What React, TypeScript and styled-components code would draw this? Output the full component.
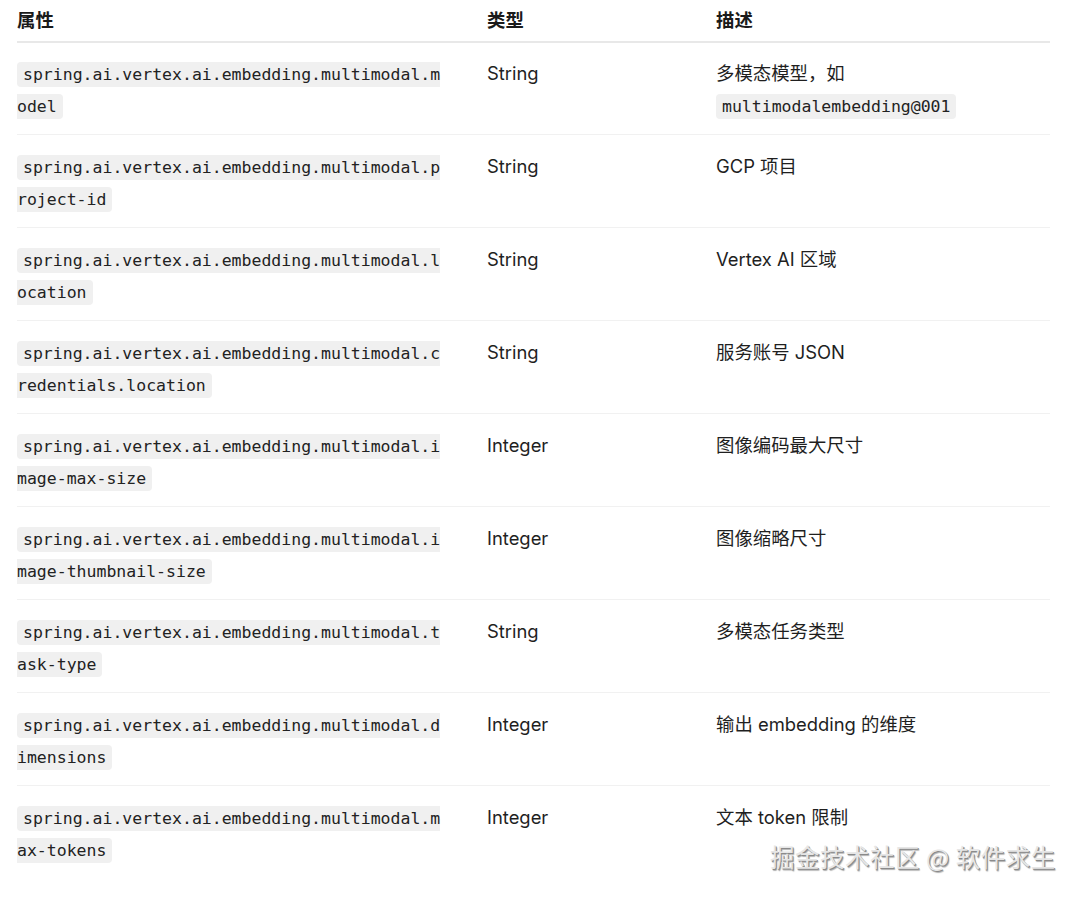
import styled, { createGlobalStyle } from "styled-components";

const GlobalStyle = createGlobalStyle`
    body {
        margin: 0;
        background: #fff;
        font-family: "Inter", "Noto Sans CJK SC", sans-serif;
        color: #1f1f1f;
    }
`;

type Row = {
    prop: string;
    type: string;
    desc: string;
    descCode?: string;
};

const rows: Row[] = [
    {prop: "spring.ai.vertex.ai.embedding.multimodal.model", type: "String", desc: "多模态模型，如", descCode: "multimodalembedding@001"},
    {prop: "spring.ai.vertex.ai.embedding.multimodal.project-id", type: "String", desc: "GCP 项目"},
    {prop: "spring.ai.vertex.ai.embedding.multimodal.location", type: "String", desc: "Vertex AI 区域"},
    {prop: "spring.ai.vertex.ai.embedding.multimodal.credentials.location", type: "String", desc: "服务账号 JSON"},
    {prop: "spring.ai.vertex.ai.embedding.multimodal.image-max-size", type: "Integer", desc: "图像编码最大尺寸"},
    {prop: "spring.ai.vertex.ai.embedding.multimodal.image-thumbnail-size", type: "Integer", desc: "图像缩略尺寸"},
    {prop: "spring.ai.vertex.ai.embedding.multimodal.task-type", type: "String", desc: "多模态任务类型"},
    {prop: "spring.ai.vertex.ai.embedding.multimodal.dimensions", type: "Integer", desc: "输出 embedding 的维度"},
    {prop: "spring.ai.vertex.ai.embedding.multimodal.max-tokens", type: "Integer", desc: "文本 token 限制"},
];

export default function App() {
    return (
        <Page>
            <GlobalStyle/>
            <Table>
                <HeadRow>
                    <HeadCell>属性</HeadCell>
                    <HeadCell>类型</HeadCell>
                    <HeadCell>描述</HeadCell>
                </HeadRow>
                {rows.map((row) => (
                    <BodyRow key={row.prop}>
                        <PropCell><Code>{row.prop}</Code></PropCell>
                        <Cell>{row.type}</Cell>
                        <Cell>
                            {row.desc}
                            {row.descCode && <><br/><Code>{row.descCode}</Code></>}
                        </Cell>
                    </BodyRow>
                ))}
            </Table>
            <Watermark>掘金技术社区 @ 软件求生</Watermark>
        </Page>
    );
}

const Page = styled.div`
    position: relative;
    width: 1080px;
    height: 898px;
    padding: 0 30px 0 17px;
    box-sizing: border-box;
    overflow: hidden;
`;

const Table = styled.div`
    width: 1033px;
`;

const HeadRow = styled.div`
    display: grid;
    grid-template-columns: 470px 229px 1fr;
    border-bottom: 2px solid #e8e8e8;
    padding: 8px 0 9px;
`;

const HeadCell = styled.div`
    font-size: 18.4px;
    font-weight: 700;
    line-height: 24px;
    color: #1a1a1a;
`;

const BodyRow = styled.div`
    display: grid;
    grid-template-columns: 470px 229px 1fr;
    padding: 14px 0 13px;
    border-bottom: 1px solid #f1f1f1;

    & + & {
        padding-top: 15px;
        padding-bottom: 13px;
    }

    &:last-child {
        border-bottom: none;
    }
`;

const Cell = styled.div`
    font-size: 18.4px;
    line-height: 32px;
    height: 64px;
`;

const PropCell = styled(Cell)`
    padding-right: 42px;
    word-break: break-all;
`;

const Code = styled.code`
    font-family: "DejaVu Sans Mono", "Liberation Mono", monospace;
    font-size: 16.5px;
    line-height: 20px;
    background: #f0f0f0;
    border-radius: 4px;
    padding: 3px 6px;
    color: #222;
    word-break: break-all;
`;

const Watermark = styled.div`
    position: absolute;
    left: 770px;
    top: 842px;
    font-family: "Noto Sans CJK SC", sans-serif;
    font-size: 24.5px;
    line-height: 30px;
    color: #e6e6e6;
    text-shadow: 1px 1px 0 #8a8a8a, 1.5px 1.5px 1px #b0b0b0;
    letter-spacing: 0.5px;
`;
